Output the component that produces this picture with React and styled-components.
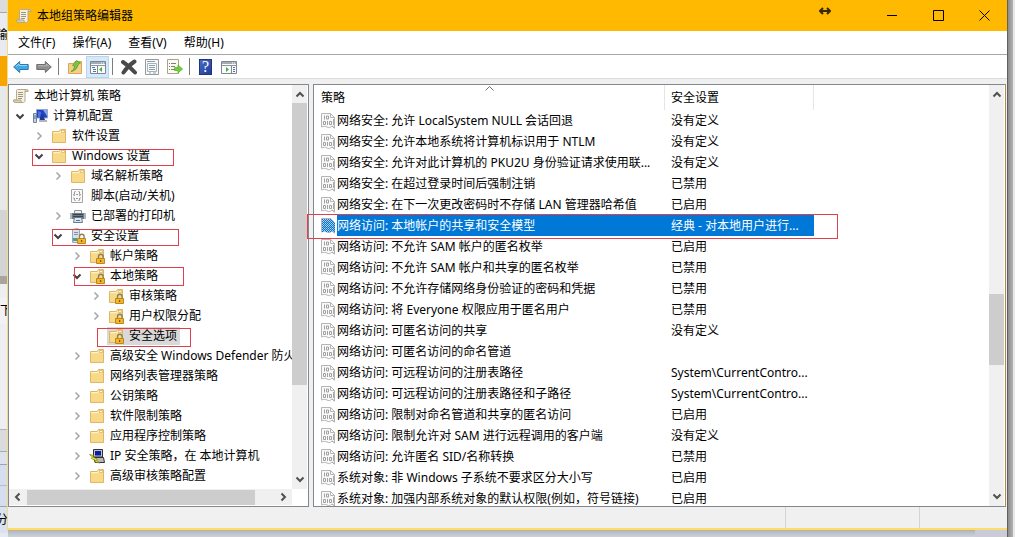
import React from 'react';
import styled, { createGlobalStyle, css } from 'styled-components';

const Global = createGlobalStyle`
  * { box-sizing: border-box; }
  body {
    margin: 0;
    background: #c9ccd6;
    color: #000;
    font: 12px/20px "Noto Sans", "Noto Sans CJK SC", sans-serif;
    overflow: hidden;
  }
  button { font: inherit; color: inherit; background: none; border: 0; padding: 0; }
  svg { display: block; flex: none; }
`;

/* ---------- desktop behind the window ---------- */

const Desktop = styled.div`
  display: grid;
  grid-template-columns: 8px minmax(0, 1fr) 8px;
  grid-template-rows: auto 8px;
`;

const BehindLeft = styled.div`
  display: flex;
  flex-direction: column;
  grid-row: 1 / span 2;
  overflow: hidden;
  background: #e6e9f0;
`;

const Slice = styled.div`
  display: flex;
  justify-content: ${(p) => (p.$from === 'left' ? 'flex-start' : 'flex-end')};
  height: ${(p) => p.$h}px;
  background: ${(p) => p.$bg};
  border-bottom: 1px solid ${(p) => p.$line || p.$bg};
  line-height: ${(p) => p.$h}px;
  flex: none;
  overflow: hidden;
  white-space: nowrap;
`;

const BehindRight = styled.div`
  grid-row: 1 / span 2;
  grid-column: 3;
  background: linear-gradient(90deg, #606060 0 1px, #8c8c8c 1px, #b4b4b4 6px, #e8e8e8 6px);
`;

const BehindBottom = styled.div`
  grid-column: 2;
  grid-row: 2;
  margin-right: 32px;
  border-bottom: 1px dashed #9aa294;
  background: linear-gradient(#b9b493, #bcc1cf 3px, #ccd2da);
`;

/* ---------- window chrome ---------- */

const Window = styled.main`
  display: flex;
  flex-direction: column;
  background: #f0f0f0;
  border-bottom: 2px solid #fbdc6c;
  box-shadow: -1px 0 0 #f3d98a;
`;

const TitleBar = styled.header`
  display: flex;
  align-items: center;
  height: 31px;
  padding-left: 8px;
  background: #ffb900;
`;

const Title = styled.h1`
  flex: 1;
  margin: 0 0 0 5px;
  font-size: 12px;
  font-weight: 400;
  line-height: 31px;
`;

const DragHint = styled.div`
  height: 22px;
  margin-right: 38px;
  align-self: flex-start;
  display: flex;
  align-items: center;
`;

const CaptionButton = styled.button`
  display: flex;
  align-items: center;
  justify-content: center;
  width: 46px;
  height: 31px;
`;

const MenuBar = styled.nav`
  display: flex;
  gap: 17px;
  height: 24px;
  padding-left: 10px;
  background: #fff;
  border-bottom: 1px solid #a8a8a8;
`;

const MenuItem = styled.button`
  line-height: 23px;
`;

const ToolBar = styled.div`
  display: flex;
  align-items: center;
  height: 24px;
  padding-left: 1px;
  background: #fff;
  border-bottom: 1px solid #dcdcdc;
`;

const ToolButton = styled.button`
  display: flex;
  align-items: center;
  justify-content: center;
  width: 23px;
  height: 22px;
  ${(p) => p.$on && css`
    background: #d5e9fa;
    box-shadow: inset 0 0 0 1px #b3d8f5;
  `}
`;

const ToolDivider = styled.span`
  width: 1px;
  height: 17px;
  margin: 0 4px 0 3px;
  background: #7c7c7c;
`;

const Panes = styled.div`
  display: flex;
  gap: 4px;
  padding-top: 5px;
`;

const StatusBar = styled.footer`
  display: flex;
  height: 21px;
`;

const StatusCell = styled.div`
  border-left: 1px solid #d4d4d4;
  width: ${(p) => p.$w}px;
  &:first-child { flex: 1; border: 0; }
`;

/* ---------- scrollbars ---------- */

const VBar = styled.div`
  display: flex;
  flex-direction: column;
  align-items: center;
  flex: none;
  width: 15px;
  margin-right: 1px;
  background: #f0f0f0;
`;

const VThumb = styled.div`
  width: 15px;
  height: ${(p) => p.$size}px;
  margin-top: ${(p) => p.$offset}px;
  margin-bottom: auto;
  background: #cdcdcd;
`;

const HBar = styled.div`
  display: flex;
  align-items: center;
  height: 16px;
  width: 283px;
  background: #f0f0f0;
`;

const HThumb = styled.div`
  width: 228px;
  height: 15px;
  margin-right: auto;
  background: #cdcdcd;
`;

const ArrowBox = styled.span`
  display: flex;
  align-items: center;
  justify-content: center;
  width: 18px;
  height: 20px;
`;

/* ---------- tree ---------- */

const TreePane = styled.section`
  flex: none;
  width: 301px;
  background: #fff;
  border: 1px solid #828790;
  padding-bottom: 1px;
`;

const TreeScroll = styled.div`
  display: flex;
`;

const Tree = styled.ul`
  flex: 1;
  min-width: 0;
  margin: 0;
  padding: 1px 0 3px;
  list-style: none;
  overflow: hidden;
`;

const TreeRow = styled.li`
  position: relative;
  display: flex;
  align-items: center;
  height: 20px;
  padding-left: ${(p) => (p.$level ? p.$level * 19 - 17 : 4)}px;
  white-space: nowrap;
`;

const Expander = styled.span`
  display: flex;
  justify-content: center;
  flex: none;
  width: 18px;
  margin-right: 2px;
`;

const Node = styled.span`
  display: flex;
  align-items: center;
  gap: 5px;
  padding: 0 3px 0 1px;
  margin-left: ${(p) => (p.$root ? -1 : 0)}px;
  line-height: 18px;
  background: ${(p) => (p.$selected ? '#d9d9d9' : 'transparent')};
`;

const Mark = styled.span`
  position: absolute;
  z-index: 1;
  left: ${(p) => p.$x}px;
  top: ${(p) => p.$y}px;
  width: ${(p) => p.$w}px;
  height: ${(p) => p.$h}px;
  border: 1px solid #e0404c;
  pointer-events: none;
`;

/* ---------- list ---------- */

const ListPane = styled.section`
  display: flex;
  flex: 1;
  min-width: 0;
  margin-right: 1px;
  contain: size;
  overflow-y: clip;
  background: #fff;
  border: 1px solid #828790;
  border-right-color: #b08c48;
`;

const ListArea = styled.div`
  flex: 1;
  min-width: 0;
`;

const Table = styled.table`
  width: 500px;
  table-layout: fixed;
  border-collapse: separate;
  border-spacing: 0;
`;

const HeadCell = styled.th`
  position: relative;
  width: ${(p) => p.$w}px;
  height: 25px;
  padding: 0 0 0 ${(p) => p.$pad}px;
  border-right: 1px solid #e5e5e5;
  font-weight: 400;
  text-align: left;
`;

const SortArrow = styled.span`
  position: absolute;
  top: 1px;
  left: 50%;
  margin-left: -4px;
`;

const Cell = styled.td`
  position: relative;
  height: 21px;
  padding: 0;
`;

const NameBox = styled.div`
  display: flex;
  align-items: center;
  gap: 1px;
  padding-left: 7px;
`;

const CellText = styled.span`
  display: block;
  flex: 1;
  min-width: 0;
  padding: 0 5px 0 ${(p) => p.$pad}px;
  overflow: hidden;
  white-space: nowrap;
  text-overflow: ellipsis;
  line-height: 21px;
  ${(p) => p.$selected && css`
    color: #fff;
    background: #0078d7;
  `}
`;

/* ---------- icons ---------- */

const chevronPaths = {
  up: 'M1.5 6.5 5 3l3.5 3.5',
  down: 'M1.5 3.5 5 7l3.5-3.5',
  left: 'M6.5 1.5 3 5l3.5 3.5',
  right: 'M3.5 1.5 7 5 3.5 8.5',
};

const Chevron = ({ dir, color = '#505050', w = 2 }) => (
  <svg width="10" height="10" viewBox="0 0 10 10" fill="none" stroke={color} strokeWidth={w}>
    <path d={chevronPaths[dir]} />
  </svg>
);

const Svg = ({ children }) => (
  <svg width="16" height="16" viewBox="0 0 16 16" fill="none">{children}</svg>
);

const ScrollIcon = () => (
  <Svg>
    <path d="M4.500 1.500h9c1 0 1.500.8 1.500 2h-3v8.500c0 1.500-.5 2.500-1.500 2.500H2c-1 0-1.500-1-1.500-2.500h3V3c0-1 .3-1.500 1-1.500z" fill="#f8f1dd" stroke="#b5ab92" />
    <path d="M12 3.500h3c0-1.200-.5-2-1.500-2-1 0-1.500.8-1.500 2zM.5 12H8c0 1.500.5 2.500 1.500 2.500H2C1 14.500.5 13.500.5 12z" fill="#ddd0ac" stroke="#b5a98a" />
    <path d="M5 4.500h5M5 6.500h5M5 8.500h5M5 10.500h4" stroke="#9a958a" />
  </Svg>
);

const ComputerIcon = () => (
  <Svg>
    <path d="M4.500 1.500h11v8.500h-11z" fill="#1f43c4" stroke="#9aa8c4" />
    <path d="M11 2h4v6z" fill="#7fa6f5" />
    <path d="M6 3l3 1v5H6z" fill="#4a74e0" />
    <path d="M9 10.500h4v1.500h2v2H7v-2h2z" fill="#aab4c4" />
    <path d="M1.500 5.500h3v9h-3z" fill="#c9d3df" stroke="#71839c" />
    <path d="M2 8h2M2 10h2" stroke="#4c6a99" />
    <path d="M9 5.500l2 2 2 4.500H7.500z" fill="#20369a" />
  </Svg>
);

const folderShape = (
  <>
    <path d="M1.500 3.500H8l1.500-2h5v13h-13z" fill="#fbe096" stroke="#dfb566" />
    <path d="M8.500 5.500H14V14H2V6z" fill="#f8d784" opacity=".8" />
    <path d="M2.500 4.500h6l1.500-1" stroke="#fff3c8" />
    <path d="M10.500 2.500h3v2h-3z" fill="#fff8dc" stroke="#cfa95c" strokeWidth=".6" />
  </>
);

const lockShape = (
  <>
    <path d="M9.500 10.500V8.500a2.300 2.300 0 0 1 4.600 0v2" stroke="#8b8064" strokeWidth="1.400" />
    <path d="M7.500 10.500h8v5h-8z" fill="#f0b52a" stroke="#bf8618" />
    <path d="M11 12h1.200v2H11z" fill="#7d560c" />
  </>
);

const FolderIcon = () => <Svg>{folderShape}</Svg>;
const LockFolderIcon = () => <Svg>{folderShape}{lockShape}</Svg>;

const ScriptIcon = () => (
  <Svg>
    <path d="M1.500 1.500h11v13h-11z" fill="#fafafa" stroke="#a5a5a5" />
    <path d="M5.500 3.500c-1.500 0-1 1.500-1 2.200 0 .8-.6 1-1 1 .4 0 1 .2 1 1M8.500 3.500c1.500 0 1 1.500 1 2.200 0 .8.600 1 1 1-.4 0-1 .2-1 1M5.500 12.500c-1.500 0-1-1-1-1.700 0-.8-.6-1-1-1M8.500 12.500c1.500 0 1-1 1-1.700 0-.8.600-1 1-1" stroke="#7d7d7d" />
    <path d="M6 6.500h2M6 10.500h2" stroke="#999" />
  </Svg>
);

const PrinterIcon = () => (
  <Svg>
    <path d="M4.500 2.500h7V6h-7z" fill="#e9eef2" stroke="#8a9299" />
    <path d="M0 5h16v6H0z" fill="#717a82" />
    <path d="M0 5h2v6H0zM14 5h2v6h-2z" fill="#aeb7bf" />
    <path d="M3 6.500h10M3 8.500h10" stroke="#3d454c" />
    <path d="M4.500 9.500h7l1 5h-9z" fill="#d9e7f2" stroke="#6f7a84" />
    <path d="M6 12.500h4" stroke="#3f7fb5" />
  </Svg>
);

const ServerLockIcon = () => (
  <Svg>
    <path d="M2.500 1.500l5-1 2 1v13h-7z" fill="#d9e0e6" stroke="#9aa6b0" />
    <path d="M4 4.500h4M4 6.500h4" stroke="#7d93a8" />
    <path d="M3 11.500h4" stroke="#42a0a4" strokeWidth="3" />
    {lockShape}
  </Svg>
);

const IpIcon = () => (
  <Svg>
    <path d="M4.500 1.500h9v7.500h-9z" fill="#c6c6c6" stroke="#303030" />
    <path d="M6 3h6v4.500H6z" fill="#0a1ca8" />
    <path d="M5 9.500h9.500l1 5H6z" fill="#b8b8b8" stroke="#303030" />
    <path d="M.5 6.500l4 1-.5 1.500 4 2-.5 1.500 3.500 2.500-5-1 .5-1.500-4-2 .8-1.500z" fill="#f4ee2a" stroke="#7a7a10" strokeWidth=".7" />
  </Svg>
);

const policyOutline = 'M1 1h9l4 4v10l-3-2c-2 2-3.500 2-5 1-1.500-.8-3-.8-5 0z';

const PolicyIcon = ({ selected }) => (
  <svg width="15" height="16" viewBox="0 0 15 16" fill="none">
    <path d="M.5.5h9l4 4v10.500l-2.500-2c-2 2-3.500 2-5 1-1.500-.8-3-.8-5.500 0z" fill="#f9f9f9" stroke="#b5b5b5" />
    <path d="M9.500.5v4h4" stroke="#b5b5b5" />
    <path d="M3.500 2.500v4M5.500 3h2v3h-2zM2.500 8.500h2v3h-2zM6.500 8v4M8.500 8.500h2v3h-2z" stroke="#a0a0a0" />
    <path d="M11 13l2.500 2M12.500 6v6" stroke="#a8a8a8" />
    {selected && (
      <>
        <defs>
          <pattern id="dither" width="2" height="2" patternUnits="userSpaceOnUse">
            <path d="M0 0h1v1H0zM1 1h1v1H1z" fill="#0078d7" />
          </pattern>
        </defs>
        <path d={policyOutline} fill="#7fb4e0" opacity=".55" />
        <path d={policyOutline} fill="url(#dither)" shapeRendering="crispEdges" />
      </>
    )}
  </svg>
);

const BackIcon = () => (
  <Svg><path d="M.7 8l6-5.500V5.500h8.500v5H6.700v3z" fill="#3fa9e4" stroke="#2a78b0" /><path d="M3 7.500l3-2.500v1.500h8" stroke="#93d5f6" /></Svg>
);
const ForwardIcon = () => (
  <Svg><path d="M15.300 8l-6-5.500V5.500H.8v5h8.500v3z" fill="#8e8e8e" stroke="#6d6d6d" /><path d="M2 6.800h8.500V5l2.500 2.500" stroke="#b9b9b9" /></Svg>
);
const UpFolderIcon = () => (
  <Svg>
    <path d="M1.500 4.500h5l1.500-2h6.500v12h-13z" fill="#f6cf85" stroke="#d8a65c" />
    <path d="M4 12.500c2-1 3.500-3 3.500-5.500L5.500 6.500 9.500 1.500l4 2.500-2.500 1.500C10.500 9 8 12 4 12.500z" fill="#7cc63f" stroke="#559c2c" strokeWidth=".8" />
  </Svg>
);

const panelShape = (
  <>
    <path d="M.5 2.500h15v12H.5z" fill="#fbfbfb" stroke="#7f8790" />
    <path d="M1 3h14v2H1z" fill="#a5acb4" />
    <path d="M11 4h1M13 4h1" stroke="#fff" />
    <path d="M1 6.500h14" stroke="#8c949c" />
  </>
);
const TreePanelIcon = () => (
  <Svg>
    {panelShape}
    <path d="M7.500 7v7" stroke="#7f8790" />
    <path d="M2 8.500h3M3 10.500h3M3 12.500h3" stroke="#4d74a8" />
    <path d="M12 8v5l-3-2.500z" fill="#3fae49" />
  </Svg>
);
const ActionPanelIcon = () => (
  <Svg>
    {panelShape}
    <path d="M10.500 7v7" stroke="#7f8790" />
    <path d="M12 8.500h2M12 10.500h2M12 12.500h2" stroke="#4d74a8" />
    <path d="M5 8v5l3-2.500z" fill="#3fae49" />
  </Svg>
);
const DeleteIcon = () => (
  <Svg><path d="M2 3c4 2.500 8 6 12 10.500M13.500 2.500C9.500 5 5.500 9 2.500 13.500" stroke="#4a4a4a" strokeWidth="4" strokeLinecap="round" /></Svg>
);
const PropertiesIcon = () => (
  <Svg>
    <path d="M1.500.5h13v15h-13z" fill="#fafafa" stroke="#9a9a9a" />
    <path d="M3.500 4.500h9v8h-9z" stroke="#9fb6c4" />
    <path d="M3 2.500h8M5 6.500h6M5 8.500h6M5 10.500h6M5 14h2M9 14h3" stroke="#8fa0aa" />
  </Svg>
);
const ExportIcon = () => (
  <Svg>
    <path d="M.5.500h11v14H.5z" fill="#fdfbee" stroke="#a9a48f" />
    <path d="M4 4.500h5M4 7.500h4M4 10.500h4M2 4.500h1M2 7.500h1M2 10.500h1" stroke="#7c7c8c" />
    <path d="M7.500 8.500h3.500V6l4.500 4-4.500 4v-2.500H7.500z" fill="#6ccf35" stroke="#55ad28" strokeWidth=".7" />
  </Svg>
);
const HelpFrame = styled.span`
  width: 13px;
  height: 16px;
  background: linear-gradient(135deg, #4d6ec9, #1d3a94);
  box-shadow: inset 0 0 0 1px #1c357f;
  color: #fff;
  font: 16px/16px "Liberation Serif", serif;
  text-align: center;
`;

/* ---------- data ---------- */

const tree = [
  [0, '', ScrollIcon, '本地计算机 策略'],
  [1, 'open', ComputerIcon, '计算机配置'],
  [2, 'closed', FolderIcon, '软件设置'],
  [2, 'open', FolderIcon, 'Windows 设置', { x: 23, y: 3, w: 142, h: 17 }],
  [3, 'closed', FolderIcon, '域名解析策略'],
  [3, '', ScriptIcon, '脚本(启动/关机)'],
  [3, 'closed', PrinterIcon, '已部署的打印机'],
  [3, 'open', ServerLockIcon, '安全设置', { x: 43, y: 3, w: 127, h: 17 }],
  [4, 'closed', LockFolderIcon, '帐户策略'],
  [4, 'open', LockFolderIcon, '本地策略', { x: 65, y: 1, w: 110, h: 19 }],
  [5, 'closed', LockFolderIcon, '审核策略'],
  [5, 'closed', LockFolderIcon, '用户权限分配'],
  [5, '', LockFolderIcon, '安全选项', { x: 88, y: 2, w: 94, h: 19 }],
  [4, 'closed', FolderIcon, '高级安全 Windows Defender 防火墙'],
  [4, '', FolderIcon, '网络列表管理器策略'],
  [4, 'closed', FolderIcon, '公钥策略'],
  [4, 'closed', FolderIcon, '软件限制策略'],
  [4, 'closed', FolderIcon, '应用程序控制策略'],
  [4, 'closed', IpIcon, 'IP 安全策略，在 本地计算机'],
  [4, 'closed', FolderIcon, '高级审核策略配置'],
];

const policies = [
  ['网络安全: 允许 LocalSystem NULL 会话回退', '没有定义'],
  ['网络安全: 允许本地系统将计算机标识用于 NTLM', '没有定义'],
  ['网络安全: 允许对此计算机的 PKU2U 身份验证请求使用联...', '没有定义'],
  ['网络安全: 在超过登录时间后强制注销', '已禁用'],
  ['网络安全: 在下一次更改密码时不存储 LAN 管理器哈希值', '已启用'],
  ['网络访问: 本地帐户的共享和安全模型', '经典 - 对本地用户进行...'],
  ['网络访问: 不允许 SAM 帐户的匿名枚举', '已启用'],
  ['网络访问: 不允许 SAM 帐户和共享的匿名枚举', '已禁用'],
  ['网络访问: 不允许存储网络身份验证的密码和凭据', '已禁用'],
  ['网络访问: 将 Everyone 权限应用于匿名用户', '已禁用'],
  ['网络访问: 可匿名访问的共享', '没有定义'],
  ['网络访问: 可匿名访问的命名管道', ''],
  ['网络访问: 可远程访问的注册表路径', 'System\\CurrentContro...'],
  ['网络访问: 可远程访问的注册表路径和子路径', 'System\\CurrentContro...'],
  ['网络访问: 限制对命名管道和共享的匿名访问', '已启用'],
  ['网络访问: 限制允许对 SAM 进行远程调用的客户端', '没有定义'],
  ['网络访问: 允许匿名 SID/名称转换', '已禁用'],
  ['系统对象: 非 Windows 子系统不要求区分大小写', '已启用'],
  ['系统对象: 加强内部系统对象的默认权限(例如，符号链接)', '已启用'],
];
const selectedPolicy = 5;

export default function App() {
  return (
    <>
      <Global />
      <Desktop>
        <BehindLeft>
          <Slice $h={13} $bg="#dcdcdc" $line="#a9a9a9" />
          <Slice $h={43} $bg="#e9ebf0">输</Slice>
          <Slice $h={30} $bg="#f7a600" />
          <Slice $h={124} $bg="#e6e8ea" />
          <Slice $h={66} $bg="#d3d4d5" />
          <Slice $h={8} $bg="#aaa59c" />
          <Slice $h={14} $bg="#eceef2" />
          <Slice $h={26} $bg="#f1f1f6" $from="left">下</Slice>
          <Slice $h={106} $bg="#eceef4" $line="#b0b3ba" />
          <Slice $h={22} $bg="#d9dbdf" $line="#a7abb2" />
          <Slice $h={13} $bg="#dce2ee" $line="#9da3b0" />
          <Slice $h={21} $bg="#d5deee" $line="#b4bccb" />
          <Slice $h={21} $bg="#d5deee" $line="#a0a4ac" />
          <Slice $h={26} $bg="#dbe2ef">分</Slice>
        </BehindLeft>

        <Window>
          <TitleBar>
            <ScrollIcon />
            <Title>本地组策略编辑器</Title>
            <DragHint>
              <svg width="12" height="10" viewBox="0 0 12 10" fill="none" stroke="#3a2a05" strokeWidth="2">
                <path d="M1 5h10M4 2 1 5l3 3M8 2l3 3-3 3" />
              </svg>
            </DragHint>
            <CaptionButton aria-label="最小化">
              <svg width="10" height="10" viewBox="0 0 10 10" stroke="#000"><path d="M0 4.500h10" /></svg>
            </CaptionButton>
            <CaptionButton aria-label="最大化">
              <svg width="11" height="11" viewBox="0 0 11 11" fill="none" stroke="#000"><path d="M.5.5h10v10H.5z" /></svg>
            </CaptionButton>
            <CaptionButton aria-label="关闭">
              <svg width="11" height="11" viewBox="0 0 11 11" stroke="#000"><path d="M.5.5l10 10M10.500.5l-10 10" /></svg>
            </CaptionButton>
          </TitleBar>

          <MenuBar>
            <MenuItem>文件(F)</MenuItem>
            <MenuItem>操作(A)</MenuItem>
            <MenuItem>查看(V)</MenuItem>
            <MenuItem>帮助(H)</MenuItem>
          </MenuBar>

          <ToolBar>
            <ToolButton aria-label="后退"><BackIcon /></ToolButton>
            <ToolButton aria-label="前进"><ForwardIcon /></ToolButton>
            <ToolDivider />
            <ToolButton aria-label="上一级"><UpFolderIcon /></ToolButton>
            <ToolButton aria-label="显示控制台树" $on><TreePanelIcon /></ToolButton>
            <ToolDivider />
            <ToolButton aria-label="删除"><DeleteIcon /></ToolButton>
            <ToolButton aria-label="属性"><PropertiesIcon /></ToolButton>
            <ToolButton aria-label="导出列表"><ExportIcon /></ToolButton>
            <ToolDivider />
            <ToolButton aria-label="帮助"><HelpFrame>?</HelpFrame></ToolButton>
            <ToolButton aria-label="显示操作窗格"><ActionPanelIcon /></ToolButton>
          </ToolBar>

          <Panes>
            <TreePane>
              <TreeScroll>
                <Tree>
                  {tree.map(([level, state, Icon, label, mark]) => (
                    <TreeRow key={label} $level={level}>
                      {level > 0 && (
                        <Expander>
                          {state === 'open' && <Chevron dir="down" color="#404040" />}
                          {state === 'closed' && <Chevron dir="right" color="#a6a6a6" w={1.5} />}
                        </Expander>
                      )}
                      <Node $root={level === 0} $selected={label === '安全选项'}>
                        <Icon />
                        {label}
                      </Node>
                      {mark && <Mark $x={mark.x} $y={mark.y} $w={mark.w} $h={mark.h} />}
                    </TreeRow>
                  ))}
                </Tree>
                <VBar>
                  <ArrowBox><Chevron dir="up" /></ArrowBox>
                  <VThumb $offset={-2} $size={282} />
                  <ArrowBox><Chevron dir="down" /></ArrowBox>
                </VBar>
              </TreeScroll>
              <HBar>
                <ArrowBox><Chevron dir="left" /></ArrowBox>
                <HThumb />
                <ArrowBox><Chevron dir="right" /></ArrowBox>
              </HBar>
            </TreePane>

            <ListPane>
              <ListArea>
                <Table>
                  <thead>
                    <tr>
                      <HeadCell $w={351} $pad={7}>
                        策略
                        <SortArrow>
                          <svg width="9" height="5" viewBox="0 0 9 5" fill="none" stroke="#707070"><path d="M.5 4.500l4-4 4 4" /></svg>
                        </SortArrow>
                      </HeadCell>
                      <HeadCell $w={149} $pad={6}>安全设置</HeadCell>
                    </tr>
                  </thead>
                  <tbody>
                    {policies.map(([name, value], i) => {
                      const selected = i === selectedPolicy;
                      return (
                        <tr key={name}>
                          <Cell>
                            <NameBox>
                              <PolicyIcon selected={selected} />
                              <CellText $pad={0} $selected={selected}>{name}</CellText>
                            </NameBox>
                            {selected && <Mark $x={-7} $y={-1} $w={531} $h={25} />}
                          </Cell>
                          <Cell>
                            <CellText $pad={6} $selected={selected}>{value || '\u00a0'}</CellText>
                          </Cell>
                        </tr>
                      );
                    })}
                  </tbody>
                </Table>
              </ListArea>
              <VBar>
                <ArrowBox><Chevron dir="up" /></ArrowBox>
                <VThumb $offset={189} $size={71} />
                <ArrowBox><Chevron dir="down" /></ArrowBox>
              </VBar>
            </ListPane>
          </Panes>

          <StatusBar>
            <StatusCell />
            <StatusCell $w={134} />
            <StatusCell $w={88} />
          </StatusBar>
        </Window>

        <BehindRight />
        <BehindBottom />
      </Desktop>
    </>
  );
}
